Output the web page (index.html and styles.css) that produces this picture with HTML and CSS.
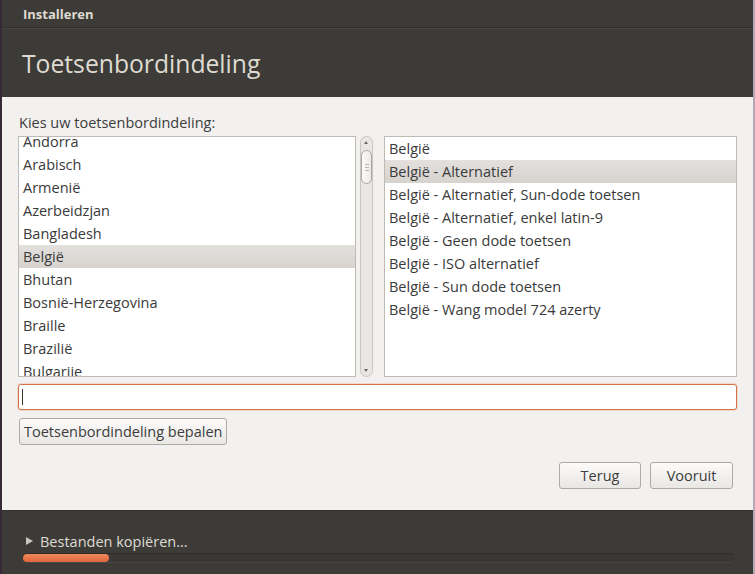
FILE: index.html
```html
<!DOCTYPE html>
<html>
<head>
<meta charset="utf-8">
<link rel="stylesheet" href="styles.css">
</head>
<body>
<div class="window">
  <div class="titlebar">Installeren</div>
  <div class="header"><h1>Toetsenbordindeling</h1></div>
  <div class="content">
    <div class="label">Kies uw toetsenbordindeling:</div>
    <div class="lists">
      <div class="list left">
        <div class="scroller">
          <div class="row">Andorra</div>
          <div class="row">Arabisch</div>
          <div class="row">Armenië</div>
          <div class="row">Azerbeidzjan</div>
          <div class="row">Bangladesh</div>
          <div class="row sel">België</div>
          <div class="row">Bhutan</div>
          <div class="row">Bosnië-Herzegovina</div>
          <div class="row">Braille</div>
          <div class="row">Brazilië</div>
          <div class="row">Bulgarije</div>
        </div>
      </div>
      <div class="vscroll">
        <div class="arrow up"></div>
        <div class="trough"><div class="thumb"><span></span><span></span><span></span></div></div>
        <div class="arrow down"></div>
      </div>
      <div class="list right">
        <div class="row">België</div>
        <div class="row sel">België - Alternatief</div>
        <div class="row">België - Alternatief, Sun-dode toetsen</div>
        <div class="row">België - Alternatief, enkel latin-9</div>
        <div class="row">België - Geen dode toetsen</div>
        <div class="row">België - ISO alternatief</div>
        <div class="row">België - Sun dode toetsen</div>
        <div class="row">België - Wang model 724 azerty</div>
      </div>
    </div>
    <div class="entry"><span class="caret"></span></div>
    <div class="detect-row"><button class="btn detect">Toetsenbordindeling bepalen</button></div>
    <div class="nav">
      <button class="btn nav-btn back">Terug</button>
      <button class="btn nav-btn">Vooruit</button>
    </div>
  </div>
  <div class="footer">
    <div class="status"><span class="tri"></span><span>Bestanden kopiëren…</span></div>
    <div class="progress"><div class="fill"></div></div>
  </div>
</div>
</body>
</html>
```
FILE: styles.css
```css
* { box-sizing: border-box; }
html, body { margin: 0; padding: 0; }
body {
  width: 755px;
  height: 574px;
  overflow: hidden;
  background: #3c3b37;
  font-family: "Open Sans", "Noto Sans", sans-serif;
  font-size: 14.5px;
  color: #3c3c3c;
}
.window {
  width: 755px;
  height: 574px;
  display: flex;
  flex-direction: column;
  border-left: 2px solid #35293a;
  border-right: 2px solid #b2a7b3;
}
.titlebar {
  height: 28px;
  flex: none;
  padding-left: 21px;
  display: flex;
  align-items: center;
  font-weight: bold;
  font-size: 13px;
  color: #dfdbd2;
  border-bottom: 1px solid #2f2e2b;
  background: #3c3b37;
}
.header {
  height: 69px;
  flex: none;
  background: #3c3b37;
  padding-left: 20px;
  display: flex;
  align-items: center;
  border-top: 1px solid #45443f;
}
.header h1 {
  margin: 0;
  font-weight: normal;
  font-size: 24.7px;
  color: #dfdbd2;
}
.content {
  height: 413px;
  flex: none;
  background: #f2f1f0;
  padding: 16px 16px 0 16px;
  display: flex;
  flex-direction: column;
}
.label {
  height: 20px;
  line-height: 20px;
  padding-left: 1px;
  color: #3c3c3c;
}
.lists {
  display: flex;
  height: 241px;
  margin-top: 3px;
}
.list {
  background: #fff;
  border: 1px solid #bebab5;
  overflow: hidden;
}
.list.left { width: 338px; }
.list.left .scroller { margin-top: -7px; }
.list.right { width: 353px; margin-left: 11px; }
.row {
  height: 23px;
  line-height: 23px;
  padding-left: 4px;
  white-space: nowrap;
  color: #3a3a3a;
}
.row.sel {
  background: linear-gradient(#e3e0dd, #d6d3cf);
}
.vscroll {
  width: 13px;
  margin-left: 4px;
  border: 1px solid #c9c6c2;
  border-radius: 7px;
  background: #e9e7e4;
  display: flex;
  flex-direction: column;
  align-items: center;
}
.arrow {
  width: 11px;
  height: 12px;
  position: relative;
  flex: none;
}
.arrow::after {
  content: "";
  position: absolute;
  left: 3px;
  border-left: 2.5px solid transparent;
  border-right: 2.5px solid transparent;
}
.arrow.up::after { top: 4px; border-bottom: 3px solid #6b6b6b; }
.arrow.down::after { top: 5px; border-top: 3px solid #6b6b6b; }
.trough { flex: 1; width: 11px; }
.thumb {
  margin-top: 1px;
  height: 34px;
  width: 11px;
  border: 1px solid #aaa6a1;
  border-radius: 6px;
  background: linear-gradient(90deg, #fafafa, #eceae8);
  display: flex;
  flex-direction: column;
  align-items: center;
  justify-content: center;
  gap: 2px;
}
.thumb span { width: 4px; height: 1px; background: #b9b6b2; }
.entry {
  margin-top: 7px;
  height: 26px;
  border: 1px solid #d2734a;
  border-radius: 3px;
  background: #fff;
  box-shadow: 0 0 0 1px rgba(240, 170, 140, 0.35);
  padding: 4px 3px;
  width: 719px;
}
.caret { display: block; width: 1px; height: 16px; background: #333; }
.detect-row { margin-top: 8px; }
.btn {
  font-family: inherit;
  font-size: 14.5px;
  color: #3c3c3c;
  height: 27px;
  border: 1px solid #aeaaa5;
  border-radius: 3px;
  background: linear-gradient(#fcfbfa, #e9e7e4);
  padding: 0 4px;
  margin: 0;
}
.detect { margin-left: 1px; }
.nav {
  margin-top: 17px;
  display: flex;
  justify-content: flex-end;
  gap: 9px;
  padding-right: 4px;
}
.nav-btn { width: 83px; }
.nav-btn.back { width: 82px; }
.footer {
  flex: 1;
  background: #3c3b37;
  padding: 21px 0 0 20px;
  border-top: 1px solid #33322e;
}
.status {
  display: flex;
  align-items: center;
  height: 18px;
  color: #dfdbd2;
}
.tri {
  width: 0; height: 0;
  border-top: 4px solid transparent;
  border-bottom: 4px solid transparent;
  border-left: 7px solid #c8c5bf;
  margin: 0 7px 0 4px;
}
.progress {
  margin-top: 3px;
  width: 712px;
  height: 10px;
  border-radius: 5px;
  border-top: 1px solid #2d2c29;
  border-bottom: 1px solid #474641;
  background: #393834;
}
.fill {
  margin-left: 1px;
  width: 86px;
  height: 8px;
  border-radius: 4px;
  background: linear-gradient(#f08a5d, #e0653a);
}
```
